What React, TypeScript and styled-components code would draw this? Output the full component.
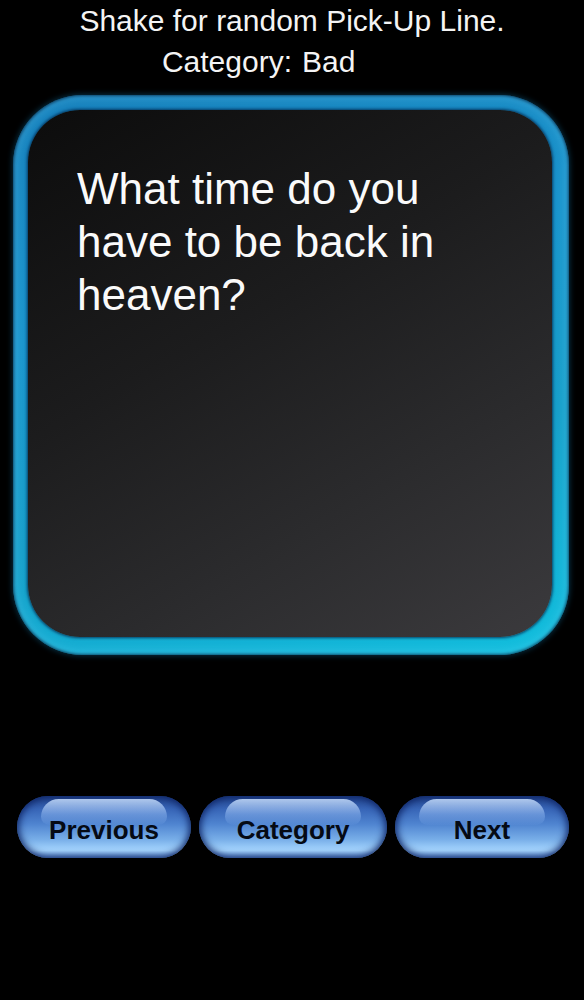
import React, { FC } from 'react';
import styled, { createGlobalStyle } from 'styled-components';

const GlobalStyle = createGlobalStyle`
  html, body {
    margin: 0;
    padding: 0;
    background: #000;
  }
  body {
    font-family: 'Liberation Sans', Arial, sans-serif;
  }
`;

const Screen = styled.div`
  width: 584px;
  height: 1000px;
  background: #000;
  display: flex;
  flex-direction: column;
  overflow: hidden;
`;

const Header = styled.div`
  color: #f4f4f4;
  font-size: 30px;
  line-height: 41px;
`;

const HintLine = styled.div`
  text-align: center;
`;

const CategoryLine = styled.div`
  display: grid;
  grid-template-columns: 292px 1fr;
  column-gap: 10px;
`;

const CategoryLabel = styled.span`
  text-align: right;
`;

const Card = styled.div`
  margin: 13px 15px 0 13px;
  height: 560px;
  box-sizing: border-box;
  padding: 15px 17px 18px 15px;
  border-radius: 70px;
  background: linear-gradient(
    165deg,
    #1780bb 0%,
    #1a94cc 35%,
    #179fc9 65%,
    #12c0de 100%
  );
  box-shadow: 0 0 6px rgba(20, 140, 200, 0.45),
    inset 0 0 3px 1px rgba(0, 30, 60, 0.7),
    inset 0 0 10px 4px rgba(120, 220, 255, 0.25);
  display: flex;
`;

const CardFace = styled.div`
  flex: 1;
  border-radius: 52px;
  background: linear-gradient(
    150deg,
    #0c0c0c 0%,
    #1c1c1d 40%,
    #2b2b2d 70%,
    #3b3a3d 100%
  );
  box-shadow: 0 0 3px 1px rgba(0, 40, 80, 0.85);
  padding: 52px 40px 0 49px;
  color: #fafafa;
  font-size: 44px;
  line-height: 53px;
`;

const ButtonRow = styled.div`
  margin-top: 141px;
  padding-left: 17px;
  display: flex;
  gap: 8px;
`;

const GlassButton = styled.button<{ $width: number }>`
  position: relative;
  width: ${(p) => p.$width}px;
  height: 62px;
  border: none;
  border-radius: 31px;
  padding: 6px 0 0;
  font-family: 'Liberation Sans', Arial, sans-serif;
  font-weight: bold;
  font-size: 26px;
  color: #050a14;
  background: linear-gradient(
    to bottom,
    #23468f 0%,
    #3866b8 22%,
    #4f84d0 45%,
    #78aee8 70%,
    #a6d6ff 88%,
    #6c9fe0 100%
  );
  box-shadow: inset 0 0 7px 2px rgba(14, 36, 100, 0.95),
    0 1px 3px rgba(0, 0, 0, 0.6);
  overflow: hidden;

  &::before {
    content: '';
    position: absolute;
    top: 3px;
    left: 14%;
    right: 14%;
    height: 42%;
    border-radius: 30px 30px 14px 14px;
    background: linear-gradient(
      to bottom,
      rgba(200, 224, 255, 0.85) 0%,
      rgba(150, 190, 245, 0.45) 60%,
      rgba(110, 160, 230, 0.1) 100%
    );
  }
`;

const ButtonLabel = styled.span`
  position: relative;
`;

const App: FC = () => {
  return (
    <>
      <GlobalStyle />
      <Screen>
        <Header>
          <HintLine>Shake for random Pick-Up Line.</HintLine>
          <CategoryLine>
            <CategoryLabel>Category:</CategoryLabel>
            <span>Bad</span>
          </CategoryLine>
        </Header>
        <Card>
          <CardFace>What time do you have to be back in heaven?</CardFace>
        </Card>
        <ButtonRow>
          <GlassButton $width={174}>
            <ButtonLabel>Previous</ButtonLabel>
          </GlassButton>
          <GlassButton $width={188}>
            <ButtonLabel>Category</ButtonLabel>
          </GlassButton>
          <GlassButton $width={174}>
            <ButtonLabel>Next</ButtonLabel>
          </GlassButton>
        </ButtonRow>
      </Screen>
    </>
  );
};

export default App;
